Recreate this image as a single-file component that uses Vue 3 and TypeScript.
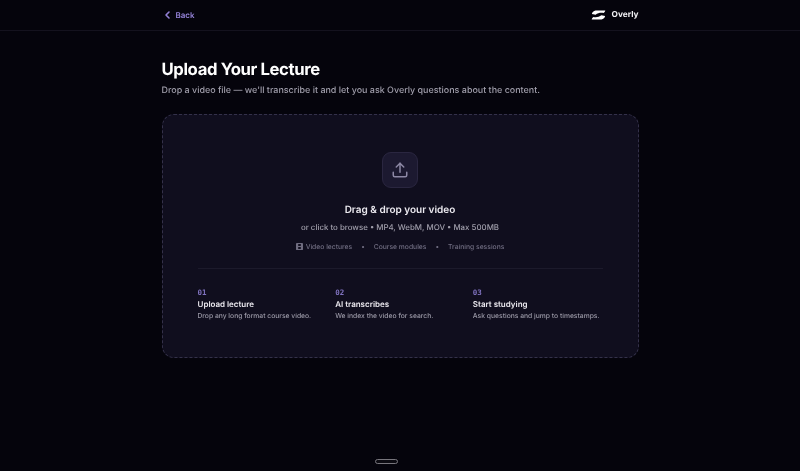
<template>
  <div class="page">
    <header class="topbar">
      <div class="topbar-inner">
        <a class="back">
          <svg width="10" height="10" viewBox="0 0 10 10" fill="none">
            <path d="M6 2 3 5l3 3" stroke="currentColor" stroke-width="1.600" stroke-linecap="round" stroke-linejoin="round" />
          </svg>
          Back
        </a>
        <div class="brand">
          <svg width="15" height="10" viewBox="0 0 15 10">
            <path d="M4.500.6h9.800c-.2 1-.9 2-1.800 2.500C10 2.500 6.800 3 4.600 4.700L.9 4C1 2.400 2.800.8 4.500.6Z" fill="#fff" />
            <path d="M10.500 9.400H.7c.2-1 .9-2 1.800-2.500 2.500.6 5.700.1 7.900-1.600l3.700.7c-.1 1.600-1.900 3.200-3.600 3.400Z" fill="#fff" />
          </svg>
          <span>Overly</span>
        </div>
      </div>
    </header>

    <main class="content">
      <h1>Upload Your Lecture</h1>
      <p class="lead">Drop a video file — we'll transcribe it and let you ask Overly questions about the content.</p>

      <section class="dropzone">
        <div class="icon-box">
          <svg width="18" height="18" viewBox="0 0 24 24" fill="none" stroke="currentColor" stroke-width="2" stroke-linecap="round" stroke-linejoin="round">
            <path d="M21 15v4a2 2 0 0 1-2 2H5a2 2 0 0 1-2-2v-4" />
            <path d="M17 8l-5-5-5 5" />
            <path d="M12 3v12" />
          </svg>
        </div>
        <h2>Drag &amp; drop your video</h2>
        <p class="browse">or click to browse • MP4, WebM, MOV • Max 500MB</p>
        <div class="tags">
          <span class="tag">
            <svg width="7" height="7" viewBox="0 0 8 8">
              <path fill-rule="evenodd" d="M1 0h6a1 1 0 0 1 1 1v6a1 1 0 0 1-1 1H1a1 1 0 0 1-1-1V1a1 1 0 0 1 1-1Zm1.500 1.200v2.100h3V1.200h-3Zm0 3.500v2.100h3V4.700h-3Z" fill="currentColor" />
            </svg>
            Video lectures
          </span>
          <span class="dot">•</span>
          <span class="tag">Course modules</span>
          <span class="dot">•</span>
          <span class="tag">Training sessions</span>
        </div>
        <div class="steps">
          <div v-for="step in steps" :key="step.num" class="step">
            <div class="num">{{ step.num }}</div>
            <div class="title">{{ step.title }}</div>
            <div class="desc">{{ step.desc }}</div>
          </div>
        </div>
      </section>
    </main>

    <div class="pill"></div>
  </div>
</template>

<script setup lang="ts">
interface Step {
  num: string
  title: string
  desc: string
}

const steps: Step[] = [
  { num: '01', title: 'Upload lecture', desc: 'Drop any long format course video.' },
  { num: '02', title: 'AI transcribes', desc: 'We index the video for search.' },
  { num: '03', title: 'Start studying', desc: 'Ask questions and jump to timestamps.' }
]
</script>

<style>
html,
body {
  margin: 0;
  background: #05040c;
}
</style>

<style scoped>
.page {
  position: relative;
  height: 471px;
  overflow: hidden;
  background: #05040c;
  font-family: Inter, "Liberation Sans", sans-serif;
  text-rendering: geometricPrecision;
  color: #fff;
  /* reference is a slightly soft capture */
  filter: blur(0.3px);
}

.topbar {
  height: 30px;
  border-bottom: 1px solid #14121e;
}

.topbar-inner {
  width: 477px;
  height: 30px;
  margin: 0 auto;
  display: flex;
  align-items: center;
  justify-content: space-between;
}

.back {
  display: flex;
  align-items: center;
  gap: 3px;
  margin-left: 1px;
  font-size: 8px;
  font-weight: 600;
  color: #9381d6;
}

.brand {
  display: flex;
  align-items: center;
  gap: 6px;
  font-size: 8.300px;
  font-weight: 700;
  color: #f2f2f5;
}

.content {
  width: 477px;
  margin: 0 auto;
}

h1 {
  margin: 28px 0 0;
  font-size: 16.700px;
  line-height: 22px;
  font-weight: 700;
  letter-spacing: -0.38px;
  color: #fff;
}

.lead {
  margin: 3px 0 0;
  font-size: 8.950px;
  line-height: 14px;
  font-weight: 500;
  color: #a09eab;
}

.dropzone {
  box-sizing: border-box;
  height: 244px;
  margin-top: 16px;
  padding: 37px 35px 0;
  display: flex;
  flex-direction: column;
  align-items: center;
  border: 1px dashed #34314a;
  border-radius: 12px;
  background: #100e1e;
}

.icon-box {
  box-sizing: border-box;
  width: 36px;
  height: 36px;
  display: flex;
  align-items: center;
  justify-content: center;
  border: 1px solid #2a2640;
  border-radius: 9px;
  background: #1c1930;
  color: #8d88a5;
}

h2 {
  margin: 15px 0 0;
  font-size: 10px;
  line-height: 14px;
  font-weight: 600;
  color: #eceaf0;
}

.browse {
  margin: 4px 0 0;
  font-size: 7.900px;
  line-height: 12px;
  font-weight: 500;
  color: #a09eab;
}

.tags {
  margin-top: 8px;
  display: flex;
  align-items: center;
  gap: 9px;
  font-size: 6.750px;
  line-height: 11px;
  font-weight: 500;
  color: #6f6c80;
}

.tag {
  display: flex;
  align-items: center;
  gap: 3px;
}

.steps {
  width: 100%;
  margin-top: 16px;
  padding-top: 19px;
  display: grid;
  grid-template-columns: repeat(3, 1fr);
  gap: 8px;
  border-top: 1px solid #1c1a2b;
}

.num {
  font-family: "DejaVu Sans Mono", "Liberation Mono", monospace;
  font-size: 7.500px;
  line-height: 10px;
  font-weight: 700;
  color: #8073c0;
}

.title {
  font-size: 8px;
  line-height: 12px;
  font-weight: 600;
  color: #eceaf0;
}

.desc {
  margin-top: 1px;
  font-size: 6.750px;
  line-height: 10px;
  font-weight: 500;
  color: #9a98a6;
}

/* floating handle, sits over the page */
.pill {
  position: absolute;
  left: 375px;
  top: 459px;
  box-sizing: border-box;
  width: 23px;
  height: 5px;
  border: 1px solid #77757c;
  border-radius: 3px;
  background: #0c0b12;
}
</style>
